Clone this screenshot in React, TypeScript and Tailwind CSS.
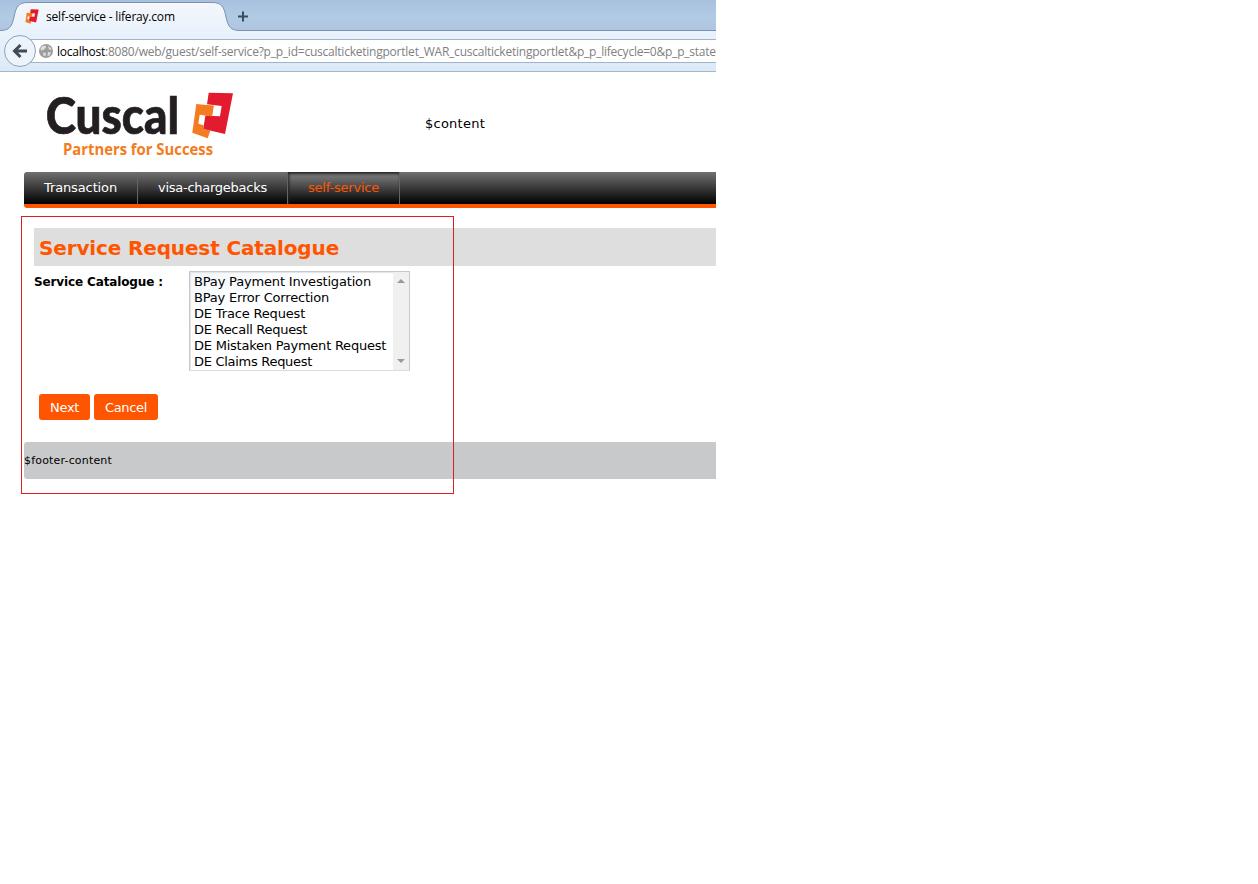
import React from "react";

const options = [
  { name: "BPay Payment Investigation", tracking: "tracking-[-0.17px]" },
  { name: "BPay Error Correction", tracking: "tracking-[-0.19px]" },
  { name: "DE Trace Request", tracking: "tracking-[-0.17px]" },
  { name: "DE Recall Request", tracking: "tracking-[-0.29px]" },
  { name: "DE Mistaken Payment Request", tracking: "tracking-[-0.23px]" },
  { name: "DE Claims Request", tracking: "tracking-[-0.29px]" },
];

function MarkShapes() {
  return (
    <>
      <path fill="#f47b20" d="M5.300 12L22.700 13.700L21 24L14.300 23.500L8.700 22.700L7.300 31.700L12.700 33.300L12.300 37L19.300 38.700L16.700 46.300L1.300 40.700Z" />
      <path fill="#e31b2f" d="M17.700 0.700L42 1.300L34 42L12.300 37L14.300 23.700L29 24.300L30.700 14L16 12.300Z" />
      <path fill="#f47b20" d="M14.300 12.900L22.700 13.700L21 24.300L14.200 23.800Z" />
    </>
  );
}

function Logo() {
  return (
    <svg className="h-[100px] w-[300px] shrink-0" viewBox="0 72 300 100">
      <text x="45.700" y="133.500" textLength="133.500" lengthAdjust="spacingAndGlyphs" fontFamily="Lato, sans-serif" fontWeight="900" fontSize="52" fill="#231f20" stroke="#231f20" strokeWidth="0.700">Cuscal</text>
      <text x="63" y="155" textLength="150" lengthAdjust="spacingAndGlyphs" fontFamily="Open Sans, sans-serif" fontWeight="700" fontSize="15.500" fill="#f47b20">Partners for Success</text>
      <g transform="translate(191 92)"><MarkShapes /></g>
    </svg>
  );
}

function ChromeBackground() {
  return (
    <svg className="absolute inset-0 h-[72px] w-[716px]" viewBox="0 0 716 72">
      <defs>
        <linearGradient id="strip" x2="0" y2="1"><stop stopColor="#a8c0dd" /><stop offset=".55" stopColor="#b1cbe5" /><stop offset="1" stopColor="#b0c4df" /></linearGradient>
        <linearGradient id="tab" x2="0" y2="1"><stop stopColor="#f4f7fb" /><stop offset="1" stopColor="#e9f2fc" /></linearGradient>
        <linearGradient id="bar" x2="0" y2="1"><stop stopColor="#eaf2fc" /><stop offset="1" stopColor="#dae9f7" /></linearGradient>
      </defs>
      <rect width="716" height="31" fill="url(#strip)" />
      <rect y="31" width="716" height="41" fill="url(#bar)" />
      <path d="M0 30.500C9 30.500 12 27 14 17C16 7 18 2.500 28 2.500H212C222 2.500 224 7 226 17C228 27 231 30.500 240 30.500H716V32H0Z" fill="url(#tab)" />
      <path d="M0 30.500C9 30.500 12 27 14 17C16 7 18 2.500 28 2.500H212C222 2.500 224 7 226 17C228 27 231 30.500 240 30.500H716" fill="none" stroke="#7893b0" />
      <path d="M20 39.500H720V62.500H20Z" fill="#fff" stroke="#a0b5ca" />
      <circle cx="20" cy="51" r="15.500" fill="#edf3fa" stroke="#8ca3bb" />
      <path d="M27 51H15M20.500 45L14.500 51L20.500 57" fill="none" stroke="#3f4b57" strokeWidth="3" />
      <circle cx="46" cy="51" r="7" fill="#9d9d9d" />
      <path d="M40.500 48L42.500 46L45.500 45.500L46 47.500L43.500 50L41 50.500ZM48 46L51 48L51.500 50L49 49.500ZM43 52.500L46 53L45.500 56L43.500 55.500ZM48 52L51 52.500L49.500 55.500L47.500 56Z" fill="#dedede" />
      <path d="M243 11.500V21.500M238 16.500H248" stroke="#3c4c5d" strokeWidth="2" />
    </svg>
  );
}

function BrowserChrome() {
  return (
    <div className="relative h-[72px] overflow-hidden border-b border-[#a0b7cd] bg-[#dcebf8] font-['Open_Sans',sans-serif] text-[12px] leading-4">
      <ChromeBackground />
      <div className="relative flex h-[31px] pl-[25px] pt-[9px]">
        <svg className="mr-[7px] h-[15px] w-[14px]" viewBox="0 0 43 47" preserveAspectRatio="none"><MarkShapes /></svg>
        <span className="whitespace-nowrap tracking-[-0.2px]">self-service - liferay.com</span>
      </div>
      <div className="relative flex whitespace-nowrap pl-[57px] pt-[13px]">
        <span className="tracking-[-0.25px]">localhost</span>
        <span className="tracking-[-0.23px] text-[#808080]">:8080/web/guest/self-service?p_p_id=cuscalticketingportlet_WAR_cuscalticketingportlet&amp;p_p_lifecycle=0&amp;p_p_state</span>
      </div>
    </div>
  );
}

export default function App() {
  return (
    <div className="h-[884px] w-[1258px] overflow-hidden bg-white font-['DejaVu_Sans',sans-serif] text-[13px] leading-[18px] text-black">
      <div className="relative h-[500px] w-[716px] whitespace-nowrap">
        <BrowserChrome />
        <header className="flex h-[100px]">
          <Logo />
          <div className="pl-[125px] pt-[43px] tracking-[0.25px]">$content</div>
        </header>
        <nav className="ml-6 flex h-9 rounded-l-[3px] border-b-4 border-[#ff5500] bg-linear-to-b/srgb from-[#707070] to-black text-white">
          <a className="w-[114px] border-r border-[#646464] pl-5 pt-[7px] tracking-[-0.12px]">Transaction</a>
          <a className="w-[150px] border-r border-[#646464] pl-5 pt-[7px] tracking-[-0.26px]">visa-chargebacks</a>
          <a className="w-[112px] border-r border-[#646464] bg-linear-to-b/srgb from-[#858585] to-black pl-5 pt-[7px] tracking-[-0.2px] text-[#ff5500] shadow-[inset_1px_2px_3px_#222]">self-service</a>
        </nav>
        <main className="ml-[34px] pt-5">
          <h1 className="h-[38px] bg-[#dedede] pl-[5px] pt-[7px] text-[20px] font-bold leading-[26px] tracking-[-0.14px] text-[#ff5500]">Service Request Catalogue</h1>
          <div className="flex pt-[5px]">
            <div className="w-[155px] pt-[2px] text-[12px] font-bold tracking-[-0.13px]">Service Catalogue :</div>
            <div className="flex h-[100px] w-[221px] border border-[#c5c8ca] border-b-[#dcdcdc] bg-linear-to-br from-[#f0f6fa] to-white to-30% shadow-[inset_1px_1px_1px_#e0e4e6]">
              <ul className="w-[203px] pl-1 pt-[2px] leading-4">
                {options.map(({ name, tracking }) => <li className={tracking} key={name}>{name}</li>)}
              </ul>
              <div className="flex w-[16px] flex-col items-center justify-between bg-[#f0f0f0] py-[7px]">
                <svg className="h-1 w-2"><path d="M0 4L4 0L8 4Z" fill="#999" /></svg>
                <svg className="h-1 w-2"><path d="M0 0L4 4L8 0Z" fill="#999" /></svg>
              </div>
            </div>
          </div>
          <div className="flex gap-1 pl-[5px] pt-[23px] text-white">
            <button className="h-[26px] w-[51px] rounded-[3px] bg-[#ff5500] pl-[11px] pt-[2px] text-left tracking-[-0.3px]">Next</button>
            <button className="h-[26px] w-16 rounded-[3px] bg-[#ff5500] pl-[11px] pt-[2px] text-left tracking-[-0.34px]">Cancel</button>
          </div>
        </main>
        <footer className="ml-6 mt-[22px] h-[37px] rounded-l-[3px] bg-[#c8c9cb] pt-[10px] text-[11px] tracking-[0.18px]">$footer-content</footer>
        <div className="pointer-events-none absolute left-[21px] top-[216px] h-[278px] w-[433px] border border-[#e31b23]" />
      </div>
    </div>
  );
}
